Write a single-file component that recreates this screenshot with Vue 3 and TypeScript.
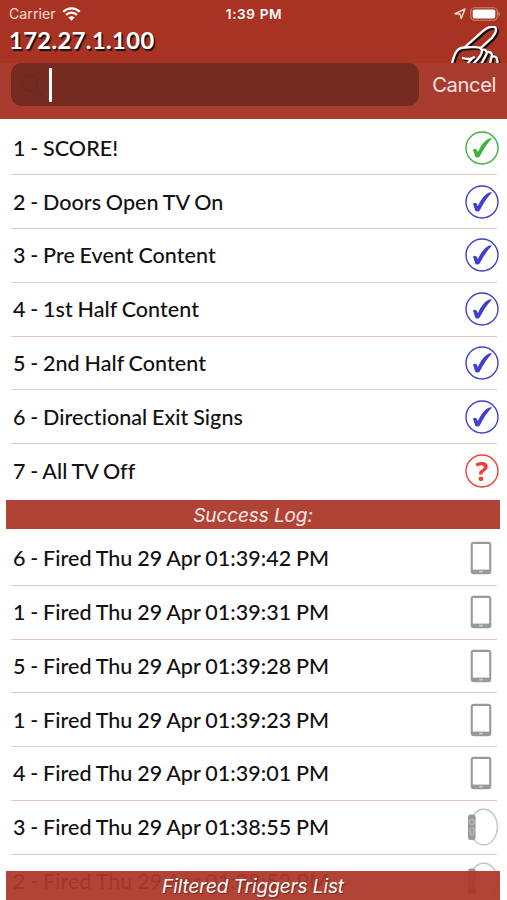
<script setup lang="ts">
type Status = 'ok' | 'ready' | 'unknown'
type Source = 'phone' | 'watch'

interface Trigger {
  id: number
  name: string
  status: Status
}

interface LogEntry {
  id: number
  time: string
  source: Source
}

const triggers: Trigger[] = [
  { id: 1, name: 'SCORE!', status: 'ok' },
  { id: 2, name: 'Doors Open TV On', status: 'ready' },
  { id: 3, name: 'Pre Event Content', status: 'ready' },
  { id: 4, name: '1st Half Content', status: 'ready' },
  { id: 5, name: '2nd Half Content', status: 'ready' },
  { id: 6, name: 'Directional Exit Signs', status: 'ready' },
  { id: 7, name: 'All TV Off', status: 'unknown' },
]

const log: LogEntry[] = [
  { id: 6, time: '01:39:42 PM', source: 'phone' },
  { id: 1, time: '01:39:31 PM', source: 'phone' },
  { id: 5, time: '01:39:28 PM', source: 'phone' },
  { id: 1, time: '01:39:23 PM', source: 'phone' },
  { id: 4, time: '01:39:01 PM', source: 'phone' },
  { id: 3, time: '01:38:55 PM', source: 'watch' },
  { id: 2, time: '01:38:52 PM', source: 'watch' },
]
</script>

<template>
  <div class="screen">
    <header class="top">
      <div class="status">
        <div class="carrier">
          <span>Carrier</span>
          <svg class="wifi" width="19" height="14" viewBox="0 0 19 14">
            <path d="M1.2 4.8C6 .1 13 .1 17.8 4.8M4.1 7.8c3.1-3 7.7-3 10.8 0" fill="none" stroke="#fff" stroke-width="2.3" />
            <path d="M6.4 10.4c1.8-1.7 4.4-1.7 6.2 0L9.5 13.7z" fill="#fff" />
          </svg>
        </div>
        <span class="clock">1:39 PM</span>
        <div class="indicators">
          <svg width="12" height="12" viewBox="0 0 12 12">
            <path d="M1 5.7L11 1 7.2 10.6 6 6z" fill="none" stroke="#fbdcd7" stroke-width="1.4" stroke-linejoin="round" />
          </svg>
          <svg width="31" height="14" viewBox="0 0 31 14">
            <rect x=".8" y=".8" width="26.4" height="12.4" rx="3.6" fill="none" stroke="#d08376" stroke-width="1.1" />
            <rect x="2.7" y="2.5" width="22.6" height="9" rx="1.8" fill="#fff" />
            <path d="M28.4 4.7c2.2 1 2.2 3.6 0 4.6z" fill="#d08376" />
          </svg>
        </div>
      </div>
      <div class="title">
        <h1>172.27.1.100</h1>
        <svg class="hand" width="52" height="39" viewBox="0 0 52 39" fill="none" stroke-linecap="round" stroke-linejoin="round">
          <g stroke="#111" stroke-width="2.4" transform="translate(1.7 1.7)">
            <path d="M15.5 20.5L32.5 5.4C37 1.6 42.5-.6 45 1.2c2.5 2 .2 7-3.2 10.8L30.5 22.2" />
            <path d="M1.5 40c1.4-7 3-14 7-16.8 3.6-2.5 8-1.8 12.7-2 4.2 0 7.8-.6 9.8 1.5 2 2.2-.2 6.7-3 10l-5 5.3" />
            <path d="M13 32c3.7 1.4 7.8 1.2 11-.7M18 36.8l3.5-3.6M32 23.8c3.7-.7 5.4 1.5 4.4 4.5L31.8 37M37.2 26.2c3.2-.8 5.2 1 4.6 4.2l-1.8 7M42.6 30.4c3.6-.5 5.2 2 4.9 8" />
          </g>
          <g stroke="#fff" stroke-width="2.3">
            <path d="M15.5 20.5L32.5 5.4C37 1.6 42.5-.6 45 1.2c2.5 2 .2 7-3.2 10.8L30.5 22.2" />
            <path d="M1.5 40c1.4-7 3-14 7-16.8 3.6-2.5 8-1.8 12.7-2 4.2 0 7.8-.6 9.8 1.5 2 2.2-.2 6.7-3 10l-5 5.3" />
            <path d="M13 32c3.7 1.4 7.8 1.2 11-.7M18 36.8l3.5-3.6M32 23.8c3.7-.7 5.4 1.5 4.4 4.5L31.8 37M37.2 26.2c3.2-.8 5.2 1 4.6 4.2l-1.8 7M42.6 30.4c3.6-.5 5.2 2 4.9 8" />
          </g>
        </svg>
      </div>
      <div class="search">
        <div class="field">
          <svg width="24" height="24" viewBox="0 0 24 24" fill="none" stroke="#672c29" stroke-width="1.8">
            <circle cx="10" cy="10" r="8" />
            <path d="M16 16l6 6" stroke-linecap="round" />
          </svg>
          <i class="caret"></i>
        </div>
        <span class="cancel">Cancel</span>
      </div>
    </header>

    <ul class="list triggers">
      <li v-for="t in triggers" :key="t.id">
        <span>{{ t.id }} - {{ t.name }}</span>
        <svg class="mark" :class="t.status" width="34" height="34" viewBox="0 0 34 34">
          <circle cx="17" cy="17" r="16" />
          <path
            v-if="t.status !== 'unknown'"
            d="M7.9 19c1.5-2 3.9-1.6 4.9 2.2 2.6-5.6 6.1-11.2 10.8-13.5.9-.4 3-.7 3.2 0-5.1 5.4-8.6 11-11.9 17.5-.9 1.8-4.1 1.8-4.7.3-.9-2.3-1-4.5-2.3-6.5z"
          />
          <text v-else x="17" y="26.7" text-anchor="middle">?</text>
        </svg>
      </li>
    </ul>

    <div class="bar">Success Log:</div>

    <ul class="list log">
      <li v-for="entry in log" :key="entry.time">
        <span>{{ entry.id }} - Fired Thu 29 Apr {{ entry.time }}</span>
        <svg v-if="entry.source === 'phone'" class="phone" width="22" height="34" viewBox="0 0 22 34">
          <rect x=".7" y=".8" width="20.6" height="32.4" rx="3" fill="#999" />
          <rect x="2.8" y="3" width="16.4" height="25.6" fill="#fff" />
          <rect x="9" y="29.7" width="4" height="1.8" rx=".8" fill="#ccc" />
        </svg>
        <svg v-else class="watch" width="32" height="38" viewBox="0 0 32 38">
          <ellipse cx="16.7" cy="19" rx="13.7" ry="17.8" fill="#fff" stroke="#c4c4c4" stroke-width="1.4" />
          <rect x="1" y="6.5" width="7.6" height="25.5" rx="2.5" fill="#999" />
          <circle cx="4.8" cy="14" r="2.5" fill="none" stroke="#c8c8c8" />
          <rect x="3" y="20" width="4" height="7" rx="2" fill="none" stroke="#c8c8c8" />
        </svg>
      </li>
    </ul>

    <div class="bar footer">Filtered Triggers List</div>
  </div>
</template>

<style>
body {
  margin: 0;
}
</style>

<style scoped>
.screen {
  position: relative;
  width: 507px;
  height: 900px;
  overflow: hidden;
  background: #fff;
  color: #111;
  font-family: Lato, 'Noto Sans', sans-serif;
}
.top {
  height: 119px;
  background: #a93323;
  color: #fff;
}
.status {
  display: grid;
  grid-template-columns: 1fr auto 1fr;
  align-items: center;
  height: 26px;
  padding: 1px 6px 0 9px;
  box-sizing: border-box;
  font: 14.2px Inter, sans-serif;
}
.carrier {
  display: flex;
  align-items: center;
  gap: 6px;
  color: #f8dcd7;
}
.clock {
  position: relative;
  left: -1px;
  font-weight: 600;
  font-size: 13.6px;
  letter-spacing: 0.6px;
}
.indicators {
  display: flex;
  align-items: center;
  justify-content: flex-end;
  gap: 4px;
}
.title {
  display: flex;
  justify-content: space-between;
  height: 37px;
  padding: 0 5px 0 9px;
  overflow: hidden;
}
h1 {
  margin: 0;
  font-size: 23.7px;
  font-weight: 700;
  line-height: 28px;
  letter-spacing: 0.42px;
  text-shadow: 1.5px 1.5px 1px #111;
}
.search {
  display: flex;
  align-items: flex-start;
  justify-content: space-between;
  height: 56px;
  padding: 0 11px;
  box-sizing: border-box;
  background: #aa3c2f;
}
.field {
  display: flex;
  align-items: center;
  gap: 5px;
  width: 408px;
  height: 43px;
  padding-left: 9px;
  box-sizing: border-box;
  border-radius: 11px;
  background: #752b20;
}
.caret {
  width: 3px;
  height: 34px;
  border-radius: 1px;
  background: #fff;
}
.cancel {
  color: #fbe4e0;
  font: 20.2px/43px Inter, sans-serif;
  letter-spacing: -0.4px;
}
.list {
  margin: 0;
  padding: 0 10px 0 11px;
  list-style: none;
}
.list li {
  display: flex;
  align-items: center;
  justify-content: space-between;
  height: 53.75px;
  padding: 0 0 0 2px;
  box-sizing: border-box;
  border-bottom: 1px solid #e6c6c2;
  font-size: 21.5px;
  font-weight: 500;
  font-variant-ligatures: none;
  letter-spacing: 0.05px;
  word-spacing: -0.75px;
}
.triggers {
  height: 378.5px;
  padding-top: 2.5px;
}
.triggers li:last-child {
  border-bottom: 0;
}
.mark {
  overflow: visible;
  margin-right: -2px;
  fill: currentColor;
}
.mark circle {
  fill: none;
  stroke: currentColor;
  stroke-width: 1.4;
}
.mark text {
  font: 700 27px/1 'Open Sans', sans-serif;
}
.ok {
  color: #3cb53d;
}
.ready {
  color: #4140cb;
}
.unknown {
  color: #ee4034;
}
.bar {
  height: 29px;
  margin: 0 7px 0 6px;
  background: #b04336;
  color: #fbe9e6;
  font: italic 19px/31px Inter, sans-serif;
  letter-spacing: -0.1px;
  text-align: center;
}
.log {
  padding-top: 3px;
}
.phone {
  margin-right: 5px;
}
.watch {
  margin-right: -2px;
}
.footer {
  position: absolute;
  right: 0;
  bottom: 0;
  left: 0;
  background: rgba(172, 56, 42, 0.94);
  color: #fff;
  text-shadow: 1px 1px 1px rgba(60, 10, 5, 0.5);
}
</style>
